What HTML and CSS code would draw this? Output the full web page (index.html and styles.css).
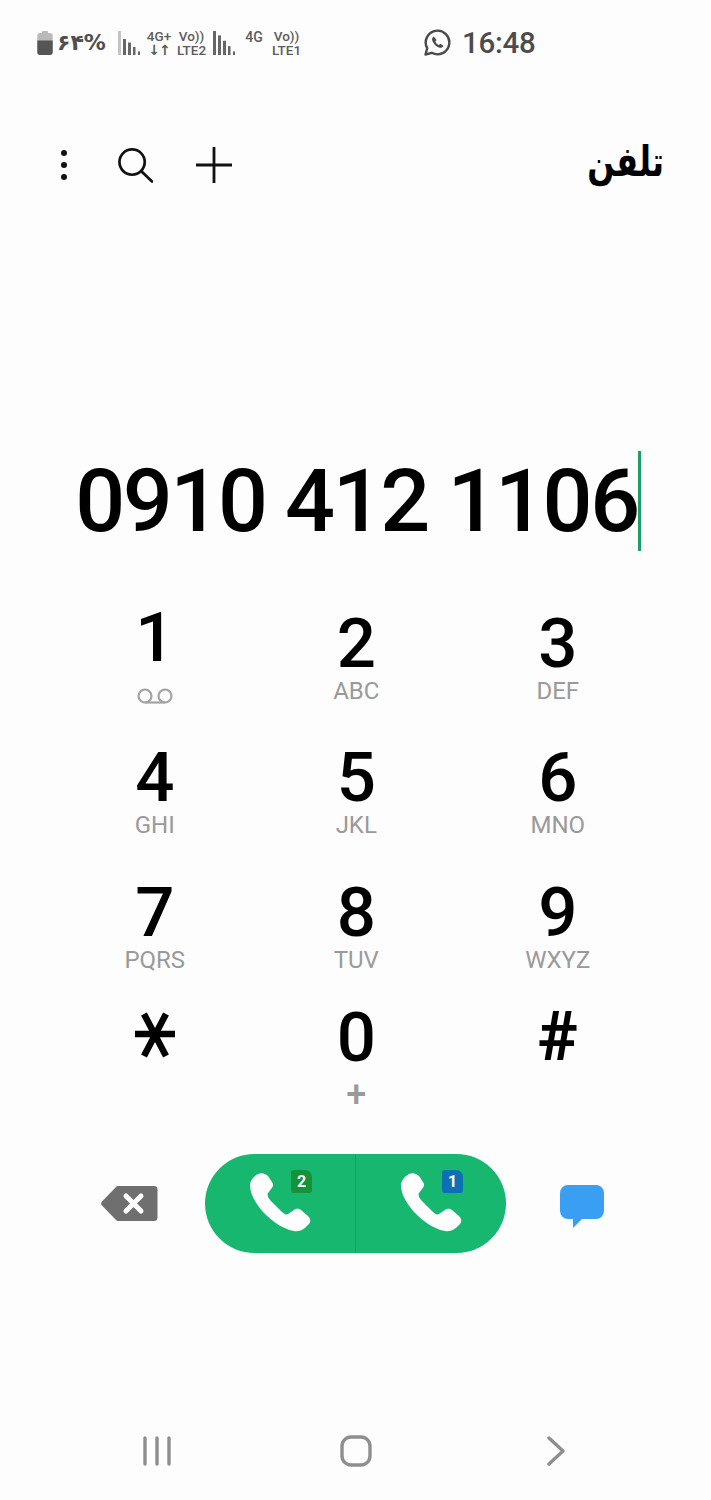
FILE: index.html
```html
<!DOCTYPE html>
<html lang="fa">
<head>
<meta charset="utf-8">
<title>تلفن</title>
<link rel="stylesheet" href="styles.css">
</head>
<body>
<div class="screen">
  <div class="status">
    <div class="status-left">
      <svg class="battery" width="16" height="24" viewBox="0 0 16 25"><path d="M5 0h6v2h2a3 3 0 0 1 3 3v17a3 3 0 0 1-3 3H3a3 3 0 0 1-3-3V5a3 3 0 0 1 3-3h2z" fill="#b9b9b9"/><path d="M0 10h16v12a3 3 0 0 1-3 3H3a3 3 0 0 1-3-3z" fill="#555"/></svg>
      <span class="percent">۶۴%</span>
      <svg class="bars first" width="22" height="24" viewBox="0 0 22 27" preserveAspectRatio="none"><rect x="0" y="0" width="3" height="27" fill="#c4c4c4"/><rect x="5" y="9" width="3" height="18" fill="#666"/><rect x="10" y="13" width="3" height="14" fill="#666"/><rect x="15" y="18" width="2.5" height="9" fill="#666"/><rect x="20" y="23" width="2" height="4" fill="#666"/></svg>
      <div class="net gplus"><span>4G+</span><span class="arrows">↓↑</span></div>
      <div class="net volte"><span>Vo))</span><span>LTE2</span></div>
      <svg class="bars" width="22" height="24" viewBox="0 0 22 27" preserveAspectRatio="none"><rect x="0" y="0" width="3" height="27" fill="#666"/><rect x="5" y="5" width="3" height="22" fill="#666"/><rect x="10" y="11" width="3" height="16" fill="#666"/><rect x="15" y="17" width="2.5" height="10" fill="#666"/><rect x="20" y="23" width="2" height="4" fill="#666"/></svg>
      <div class="net four"><span>4G</span></div>
      <div class="net volte"><span>Vo))</span><span>LTE1</span></div>
    </div>
    <div class="status-clock">
      <svg width="27" height="27" viewBox="0 0 27 27"><path d="M1.5 25.500l1.700-6.300A11.800 11.800 0 1 1 7.800 23.800z" fill="none" stroke="#4a4a4a" stroke-width="2.400" stroke-linejoin="round"/><path d="M9.800 7.500c-1.500.8-2.200 2.500-1.400 4.500 1.200 3 3.500 5.300 6.500 6.500 2 .7 3.700 0 4.500-1.500l-3-2.200-1.500 1.300c-1.600-.7-2.900-2-3.600-3.600l1.300-1.500z" fill="#4a4a4a"/></svg>
      <span>16:48</span>
    </div>
  </div>

  <header class="toolbar">
    <div class="tools">
      <svg class="tool-dots" width="8" height="32" viewBox="0 0 8 32"><circle cx="4" cy="4" r="3" fill="#111"/><circle cx="4" cy="16" r="3" fill="#111"/><circle cx="4" cy="28" r="3" fill="#111"/></svg>
      <svg class="tool-search" width="35" height="35" viewBox="0 0 36 36"><circle cx="14.500" cy="14.500" r="13" fill="none" stroke="#111" stroke-width="2.800"/><path d="M24 24l11 10.500" stroke="#111" stroke-width="2.800" stroke-linecap="round"/></svg>
      <svg class="tool-plus" width="36" height="36" viewBox="0 0 36 36"><path d="M18 0v36M0 18h36" stroke="#111" stroke-width="2.800" stroke-linecap="round"/></svg>
    </div>
    <h1 class="title">تلفن</h1>
  </header>

  <div class="number"><span>0910 412 1106</span><i class="caret"></i></div>

  <div class="keypad">
    <div class="key"><span class="digit one">1</span><svg class="voicemail" width="36" height="16" viewBox="0 0 36 16"><circle cx="8" cy="8" r="6.500" fill="none" stroke="#a3a3a3" stroke-width="2.200"/><circle cx="28" cy="8" r="6.500" fill="none" stroke="#a3a3a3" stroke-width="2.200"/><path d="M8 14.500h20" stroke="#a3a3a3" stroke-width="2.200"/></svg></div>
    <div class="key"><span class="digit">2</span><span class="letters">ABC</span></div>
    <div class="key"><span class="digit">3</span><span class="letters">DEF</span></div>
    <div class="key"><span class="digit">4</span><span class="letters">GHI</span></div>
    <div class="key"><span class="digit">5</span><span class="letters">JKL</span></div>
    <div class="key"><span class="digit">6</span><span class="letters">MNO</span></div>
    <div class="key"><span class="digit">7</span><span class="letters">PQRS</span></div>
    <div class="key"><span class="digit">8</span><span class="letters">TUV</span></div>
    <div class="key"><span class="digit">9</span><span class="letters">WXYZ</span></div>
    <div class="key last"><svg class="star" width="40" height="46" viewBox="0 0 40 46"><path d="M0 22h40M9 2l22 42M31 2L9 44" stroke="#000" stroke-width="6.500" fill="none"/></svg></div>
    <div class="key last"><span class="digit">0</span><span class="letters plus">+</span></div>
    <div class="key last"><span class="digit hash">#</span></div>
  </div>

  <div class="actions">
    <svg class="backspace" width="57" height="37" viewBox="0 0 57 37"><path d="M17 1a3 3 0 0 0-2 1L1 16.500a3 3 0 0 0 0 4L15 35a3 3 0 0 0 2 1h36a3.500 3.500 0 0 0 3.500-3.500v-28A3.500 3.500 0 0 0 53 1z" fill="#6f6f6f"/><path d="M25 11l15 15M40 11L25 26" stroke="#fff" stroke-width="5" stroke-linecap="round"/></svg>
    <div class="call">
      <div class="call-half">
        <svg class="phone" width="61" height="60" viewBox="0 0 61 60"><path d="M8 1C12-1 16 1 18 3L22 9C24 12 23 14 21 16L18 20C17 22 18 24 20 27L31 38C34 41 36 42 38 41L44 37C47 35 49 36 51 37L58 43C61 46 61 49 58 52C54 56 50 59 44 58C32 56 18 46 9 34C3 26 0 19 0 12C0 8 4 3 8 1z" fill="#fdfdfd"/></svg>
        <span class="sim sim-two">2</span>
      </div>
      <div class="call-half">
        <svg class="phone" width="61" height="60" viewBox="0 0 61 60"><path d="M8 1C12-1 16 1 18 3L22 9C24 12 23 14 21 16L18 20C17 22 18 24 20 27L31 38C34 41 36 42 38 41L44 37C47 35 49 36 51 37L58 43C61 46 61 49 58 52C54 56 50 59 44 58C32 56 18 46 9 34C3 26 0 19 0 12C0 8 4 3 8 1z" fill="#fdfdfd"/></svg>
        <span class="sim sim-one">1</span>
      </div>
    </div>
    <svg class="message" width="44" height="43" viewBox="0 0 44 43"><path d="M8 0h28a8 8 0 0 1 8 8v18a8 8 0 0 1-8 8H22L13 43v-9H8a8 8 0 0 1-8-8V8a8 8 0 0 1 8-8z" fill="#3a9ff2"/></svg>
  </div>

  <nav class="navbar">
    <svg width="30" height="30" viewBox="0 0 30 30"><path d="M3 2v26M15 2v26M27 2v26" stroke="#8e8e8e" stroke-width="3.400" stroke-linecap="round"/></svg>
    <svg class="nav-home" width="32" height="32" viewBox="0 0 32 32"><rect x="2" y="2" width="28" height="28" rx="9" fill="none" stroke="#8e8e8e" stroke-width="3.400"/></svg>
    <svg width="18" height="30" viewBox="0 0 18 30"><path d="M2 2l14 13L2 28" fill="none" stroke="#8e8e8e" stroke-width="3.400" stroke-linecap="round" stroke-linejoin="round"/></svg>
  </nav>
</div>
</body>
</html>
```

FILE: styles.css
```css
* { box-sizing: border-box; }
html, body { margin: 0; padding: 0; }
body { background: #fdfdfd; font-family: Roboto, "DejaVu Sans", sans-serif; color: #000; }
.screen { width: 711px; height: 1500px; overflow: hidden; display: flex; flex-direction: column; }

.status { height: 85px; flex: none; display: flex; align-items: center; padding-left: 37px; color: #555; }
.status-left { display: flex; align-items: center; width: 387px; }
.battery { flex: none; }
.percent { font-family: "DejaVu Sans", sans-serif; font-weight: 700; font-size: 22px; line-height: 30px; margin-left: 4px; width: 48px; color: #4f4f4f; white-space: nowrap; }
.bars { flex: none; }
.bars.first { margin-left: 13px; }
.net { display: flex; flex-direction: column; align-items: center; font-size: 13.500px; font-weight: 500; line-height: 14px; color: #5c5c5c; }
.gplus { margin-left: 6px; width: 26px; }
.arrows { font-size: 14px; font-weight: 700; letter-spacing: -1px; }
.volte { margin-left: 3px; width: 33px; }
.volte + .bars { margin-left: 5px; }
.four { margin-left: 8px; width: 22px; margin-top: -11px; font-size: 14px; }
.four + .volte { margin-left: 5px; }
.status-clock { display: flex; align-items: center; gap: 11px; font-size: 29.500px; font-weight: 500; letter-spacing: -0.3px; color: #4c4c4c; }

.toolbar { height: 160px; flex: none; display: flex; justify-content: space-between; align-items: flex-start; padding: 62px 47px 0 60px; }
.tools { display: flex; align-items: center; gap: 0; }
.tool-search { margin-left: 50px; }
.tool-plus { margin-left: 43px; }
.title { margin: -10px 0 0; font-family: "DejaVu Sans", sans-serif; font-weight: 700; font-size: 42px; line-height: 50px; color: #000; transform: scaleX(0.76); transform-origin: right center; }

.number { height: 120px; margin-top: 196px; flex: none; display: flex; justify-content: center; align-items: center; padding-left: 5px; font-size: 88px; font-weight: 500; line-height: 100px; letter-spacing: -2.400px; }
.caret { display: block; width: 3px; height: 100px; background: #1d9d6c; flex: none; }

.keypad { display: grid; grid-template-columns: repeat(3, 201.500px); grid-auto-rows: 134.300px; padding-left: 54px; margin-top: 47px; }
.key { display: flex; flex-direction: column; align-items: center; }
.key.last { margin-top: -9px; }
.digit { font-size: 69px; line-height: 71px; font-weight: 500; }
.digit.one { margin-top: -6px; }
.letters { font-size: 24px; line-height: 24px; color: #9a9a9a; font-weight: 400; }
.voicemail { margin-top: 15px; }
.plus { font-size: 36px; font-weight: 500; line-height: 24px; margin-top: 10px; }
.star { margin-top: 10px; }
.hash { font-size: 68px; font-weight: 700; }

.actions { display: flex; align-items: center; margin-top: 8px; padding-left: 101px; height: 100px; flex: none; }
.backspace { flex: none; }
.call { margin-left: 47px; width: 301px; height: 99px; border-radius: 50px; background: #17b76f; display: flex; flex: none; }
.call-half { flex: 1; position: relative; display: flex; align-items: center; justify-content: center; }
.call-half + .call-half { border-left: 1px solid #12a25f; }
.phone { margin-left: 1px; }
.sim { position: absolute; top: 16px; width: 21px; height: 23px; border-radius: 3px; border-top-right-radius: 7px; color: #fff; font-size: 16px; line-height: 23px; font-weight: 700; text-align: center; }
.sim-two { left: 86px; background: #15923a; }
.sim-one { left: 86px; background: #0d70b5; }
.message { margin: 6px 0 0 54px; flex: none; }

.navbar { margin-top: auto; height: 98px; flex: none; display: flex; align-items: center; justify-content: space-between; padding: 0 146px 0 142px; }
.nav-home { margin-right: 7px; }
```
